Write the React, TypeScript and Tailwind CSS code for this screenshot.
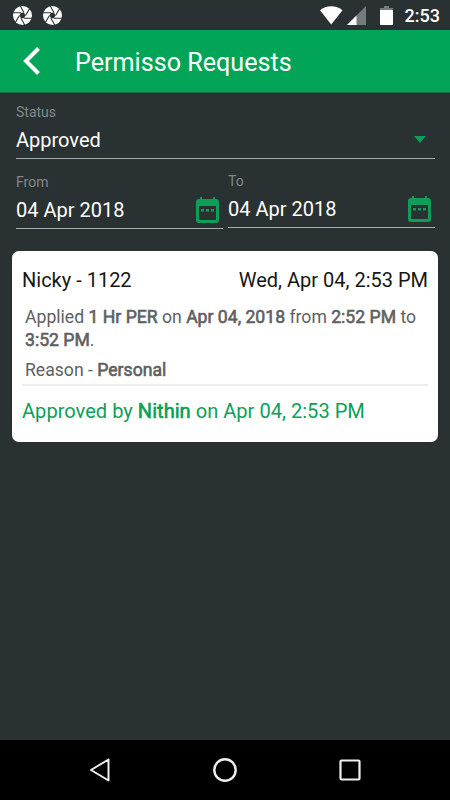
import { type ReactNode } from 'react';

interface DateFieldProps {
  label: string;
  value: string;
  className?: string;
}

function ApertureIcon({ className = '' }: { className?: string }) {
  return (
    <svg width="19" height="19" viewBox="0 0 20 20" className={className}>
      <circle cx="10" cy="10" r="10" fill="#fff" />
      <path fill="#2a3132" d="M8.400 7.200h3.200l1.600 2.800-1.600 2.800H8.400L6.800 10z" />
      <path
        fill="none"
        stroke="#2a3132"
        strokeWidth="1.100"
        d="M8.400 7.200H0M11.600 7.200L7.800.3M13.200 10L17.600 2.500M11.600 12.800H20M8.400 12.800l3.800 6.900M6.800 10l-4.400 7.500"
      />
    </svg>
  );
}

function CalendarIcon() {
  return (
    <svg width="24" height="26" viewBox="0 0 24 26" className="shrink-0">
      <path
        fill="#0f9d58"
        fillRule="evenodd"
        d="M4 0h2v2h11V0h2v2h1a3 3 0 0 1 3 3v18a3 3 0 0 1-3 3H3a3 3 0 0 1-3-3V5a3 3 0 0 1 3-3h1zM3 9v14h17V9z"
      />
      <path fill="#0f9d58" d="M5 12h3v2.500H5zM10 12h3v2.500h-3zM15 12h3v2.500h-3z" />
    </svg>
  );
}

function StatusBar() {
  return (
    <div className="flex h-[30px] items-center pl-[13px] pr-[10px] text-white">
      <ApertureIcon />
      <ApertureIcon className="ml-[11px]" />
      <svg width="23" height="19" viewBox="0 0 23 19" className="ml-auto">
        <path fill="#fff" d="M0 4.200C3.200 1.700 7.100.3 11.200.3s8.200 1.400 11.300 3.900L11.200 18.500z" />
      </svg>
      <svg width="19" height="19" viewBox="0 0 19 19" className="ml-[4px]">
        <path fill="#757b7c" d="M19 0v19H0z" />
        <path fill="#fff" d="M9.500 9.500V19H0z" />
      </svg>
      <svg width="13" height="19" viewBox="0 0 13 19" className="ml-[14px]">
        <path fill="#757b7c" d="M4 0h5v2h4v3H0V2h4z" />
        <path fill="#fff" d="M0 4h13v14a1 1 0 0 1-1 1H1a1 1 0 0 1-1-1z" />
      </svg>
      <span className="ml-[12px] pt-[2px] text-[18px] font-medium leading-none">2:53</span>
    </div>
  );
}

function DateField({ label, value, className = '' }: DateFieldProps) {
  return (
    <div className={`w-[207px] border-b border-[#a6abab] ${className}`}>
      <div className="text-[14px] leading-[18px] text-[#81898a]">{label}</div>
      <div className="flex h-[37px] items-center justify-between pr-[3px] pt-px">
        <span className="text-[20px] text-white">{value}</span>
        <CalendarIcon />
      </div>
    </div>
  );
}

// Regular weight thickened with a stroke, keeps the regular glyph widths
function Strong({ children }: { children: ReactNode }) {
  return <b className="font-normal [-webkit-text-stroke:0.6px_currentColor]">{children}</b>;
}

export default function App() {
  return (
    <div className="flex h-[800px] w-[450px] flex-col overflow-hidden bg-[#2a3132] font-[Roboto,sans-serif]">
      <StatusBar />

      <header className="flex h-[63px] items-center border-b border-[#1f6b45] bg-[#02a557] pl-[23px] text-white">
        <svg width="18" height="28" viewBox="0 0 18 28">
          <path d="M15.500 1.500L3 14l12.500 12.500" fill="none" stroke="#fff" strokeWidth="4" />
        </svg>
        <h1 className="ml-[34px] pt-[4px] text-[25.150px] leading-none">Permisso Requests</h1>
      </header>

      <main className="flex-1 px-3 pt-[10px]">
        <div className="ml-1 w-[419px] border-b border-[#a6abab]">
          <div className="text-[14px] leading-[18px] text-[#81898a]">Status</div>
          <div className="flex h-[37px] items-center justify-between pr-[9px]">
            <span className="text-[20px] text-white">Approved</span>
            <svg width="12" height="7" viewBox="0 0 12 7">
              <path fill="#0f9d58" d="M0 0h12L6 7z" />
            </svg>
          </div>
        </div>

        <div className="ml-1 mt-[14px] flex gap-[5px]">
          <DateField label="From" value="04 Apr 2018" />
          <DateField label="To" value="04 Apr 2018" className="-mt-px mb-px" />
        </div>

        <section className="mt-[22px] h-[191px] rounded-[7px] bg-white px-[10px] pt-[17px]">
          <div className="flex justify-between text-[20px] leading-6 text-[#161616]">
            <span>Nicky - 1122</span>
            <span>Wed, Apr 04, 2:53 PM</span>
          </div>
          <div className="ml-[3px] mt-[14px] text-[17.620px] leading-[23px] text-[#606060]">
            <p>
              Applied <Strong>1 Hr PER</Strong> on <Strong>Apr 04, 2018</Strong> from <Strong>2:52 PM</Strong> to
              <br />
              <Strong>3:52 PM</Strong>.
            </p>
            <p className="mt-[7px]">
              Reason - <Strong>Personal</Strong>
            </p>
          </div>
          <hr className="mt-[2px] border-t-2 border-[#ececec]" />
          <p className="mt-[13px] text-[20.100px] leading-6 text-[#0b9f58]">
            Approved by <Strong>Nithin</Strong> on Apr 04, 2:53 PM
          </p>
        </section>
      </main>

      <nav className="flex h-[60px] items-center bg-black">
        <svg width="22" height="26" viewBox="0 0 22 26" className="ml-[89px]">
          <path d="M19.500 2.500v21L2 13z" fill="none" stroke="#eee" strokeWidth="2" strokeLinejoin="round" />
        </svg>
        <svg width="24" height="24" viewBox="0 0 24 24" className="ml-[102px]">
          <circle cx="12" cy="12" r="10.700" fill="none" stroke="#eee" strokeWidth="2.400" />
        </svg>
        <svg width="22" height="22" viewBox="0 0 22 22" className="ml-[102px]">
          <rect x="1.500" y="1.500" width="19" height="19" rx="1" fill="none" stroke="#eee" strokeWidth="2.200" />
        </svg>
      </nav>
    </div>
  );
}
